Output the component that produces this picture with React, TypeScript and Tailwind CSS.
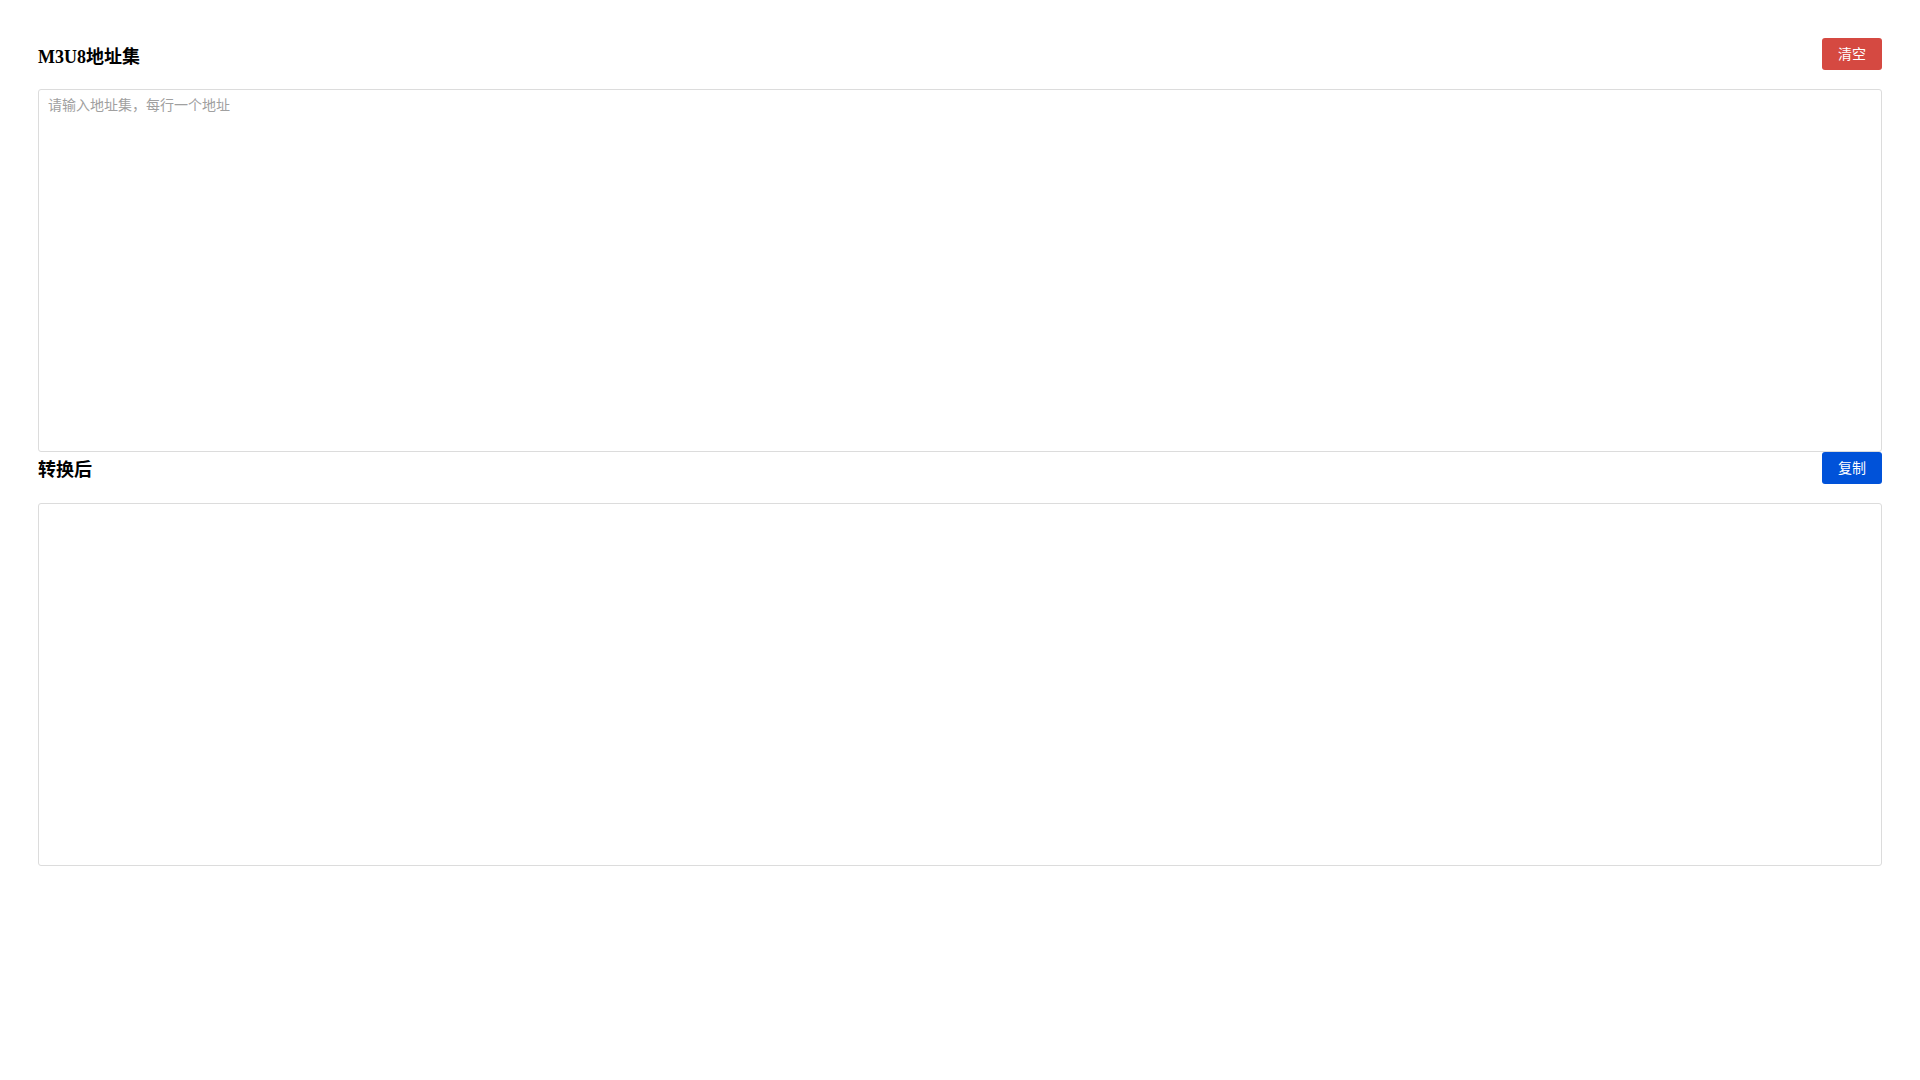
import { useState } from 'react';

export default function App() {
  const [input, setInput] = useState('');
  const [output, setOutput] = useState('');

  const handleClear = () => { setInput(''); setOutput(''); };
  const handleCopy = () => { navigator.clipboard?.writeText(output).catch(() => {}); };

  return (
    <div className="min-h-screen bg-white px-[38px] pt-[38px]" style={{ fontFamily: '"Liberation Sans", "Noto Sans CJK SC", sans-serif' }}>
      {/* === M3U8 地址集 === */}
      <div className="flex h-[32px] items-center justify-between">
        <h3 className="pt-[6px] text-[18px] font-bold text-black" style={{ fontFamily: '"Liberation Serif", "Noto Sans CJK SC", serif' }}>M3U8地址集</h3>
        <button onClick={handleClear} className="h-[32px] rounded-[3px] bg-[#d54941] px-[16px] text-[14px] text-white hover:bg-[#f6685d]">
          清空
        </button>
      </div>
      <textarea
        value={input}
        onChange={e => setInput(e.target.value)}
        placeholder="请输入地址集，每行一个地址"
        className="mt-[19px] block h-[363px] w-full resize-none rounded-[3px] border border-[#dcdcdc] px-[9px] py-[4px] text-[14px] leading-[22px] text-black placeholder:text-[#a0a0a0] focus:border-[#0052d9] focus:outline-none"
      />

      {/* === 转换后 === */}
      <div className="flex h-[32px] items-center justify-between">
        <h3 className="pt-[5px] text-[18px] font-bold text-black" style={{ fontFamily: '"Liberation Serif", "Noto Sans CJK SC", serif' }}>转换后</h3>
        <button onClick={handleCopy} className="h-[32px] rounded-[3px] bg-[#0052d9] px-[16px] text-[14px] text-white hover:bg-[#366ef4]">
          复制
        </button>
      </div>
      <textarea
        value={output}
        onChange={e => setOutput(e.target.value)}
        className="mt-[19px] block h-[363px] w-full resize-none rounded-[3px] border border-[#dcdcdc] px-[9px] py-[4px] text-[14px] leading-[22px] text-black focus:border-[#0052d9] focus:outline-none"
      />
    </div>
  );
}
